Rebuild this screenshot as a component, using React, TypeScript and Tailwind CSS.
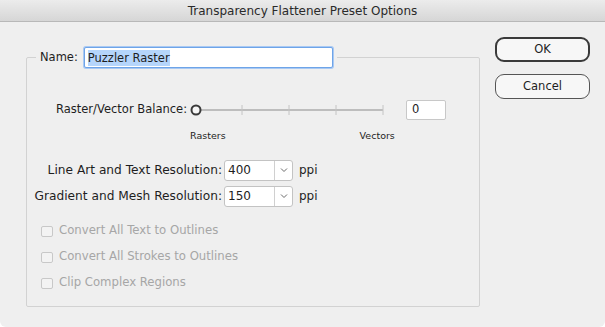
import React from "react";

const font = { fontFamily: '"DejaVu Sans", Verdana, sans-serif' };

const Slider: React.FC = () => (
  <svg width="196" height="14" viewBox="0 0 196 14" className="block">
    <line x1="10" y1="7" x2="193" y2="7" stroke="#bdbdbd" strokeWidth="2" />
    {[52, 99, 146, 193].map(x => (
      <line key={x} x1={x} y1="2" x2={x} y2="12" stroke="#c4c4c4" strokeWidth="1" />
    ))}
    <circle cx="6" cy="7" r="4.5" fill="#f6f6f6" stroke="#3a3a3a" strokeWidth="2" />
  </svg>
);

const Chevron: React.FC = () => (
  <svg width="8" height="6" viewBox="0 0 8 6">
    <path d="M1 1.5 L4 4.5 L7 1.5" fill="none" stroke="#6b6b6b" strokeWidth="1" />
  </svg>
);

const ResRow: React.FC<{ label: string; value: string }> = ({ label, value }) => (
  <div className="flex h-[26px] items-center">
    <span className="w-[195px] whitespace-nowrap text-right text-[12.2px] text-[#1e1e1e]">{label}</span>
    <div className="ml-[2px] flex h-[21px] w-[69px] items-stretch rounded-[3px] border border-[#c3c3c3] bg-white">
      <div className="flex flex-1 items-center pl-[3px] text-[12px] text-[#1e1e1e]">{value}</div>
      <div className="flex w-[18px] items-center justify-center border-l border-[#d0d0d0]">
        <Chevron />
      </div>
    </div>
    <span className="ml-[6px] text-[12px] text-[#1e1e1e]">ppi</span>
  </div>
);

const Check: React.FC<{ label: string }> = ({ label }) => (
  <div className="flex h-[26px] items-center">
    <div className="h-[11px] w-[12px] rounded-[2px] border border-[#c8c8c8] bg-[#f3f3f3]" />
    <span className="ml-[6px] text-[11.7px] text-[#a6a6a6]">{label}</span>
  </div>
);

export default function App() {
  return (
    <div className="h-[327px] w-[605px] bg-white" style={font}>
      <div className="flex h-[327px] w-[605px] flex-col overflow-hidden rounded-b-[6px] bg-[#efefef]">
        <div className="flex h-[22px] items-center justify-center border-b border-[#b8b8b8] bg-gradient-to-b from-[#ececec] to-[#d6d6d6] text-[12px] text-[#2a2a2a]">
          Transparency Flattener Preset Options
        </div>

        <div className="flex">
          <fieldset className="ml-[26px] mt-[25px] h-[260px] w-[454px] rounded-[2px] border border-[#d2d2d2]">
            <legend className="ml-[9px] flex items-center px-[4px]">
              <span className="text-[11.5px] text-[#1e1e1e]">Name:</span>
              <div className="ml-[6px] flex h-[21px] w-[249px] items-center rounded-[2px] border border-[#6ea4e8] bg-white pl-[3px] shadow-[0_0_0_1px_#a9c9f3]">
                <span className="bg-[#b5d5fb] text-[11.5px] leading-[16px] text-[#1e1e1e]">Puzzler Raster</span>
              </div>
            </legend>

            <div className="mt-[32px] flex items-center pl-[29px]">
              <span className="w-[134px] whitespace-nowrap text-[11.5px] text-[#1e1e1e]">Raster/Vector Balance:</span>
              <Slider />
              <div className="ml-[20px] flex h-[20px] w-[40px] items-center rounded-[2px] border border-[#c8c8c8] bg-white pl-[5px] text-[11.5px] text-[#1e1e1e]">
                0
              </div>
            </div>

            <div className="mt-[8px] flex h-[16px] items-center text-[9.5px] text-[#1e1e1e]">
              <span className="ml-[163px]">Rasters</span>
              <span className="ml-[134px]">Vectors</span>
            </div>

            <div className="mt-[13px] flex flex-col">
              <ResRow label="Line Art and Text Resolution:" value="400" />
              <ResRow label="Gradient and Mesh Resolution:" value="150" />
            </div>

            <div className="mt-[9px] flex flex-col pl-[14px]">
              <Check label="Convert All Text to Outlines" />
              <Check label="Convert All Strokes to Outlines" />
              <Check label="Clip Complex Regions" />
            </div>
          </fieldset>

          <div className="ml-[15px] mt-[15px] flex flex-col gap-[12px]">
            <button className="h-[25px] w-[95px] rounded-[9px] border-2 border-[#3a3a3a] bg-[#f7f7f7] text-[11.5px] text-[#1e1e1e]">
              OK
            </button>
            <button className="h-[25px] w-[95px] rounded-[9px] border border-[#555] bg-[#f7f7f7] text-[11.5px] text-[#1e1e1e]">
              Cancel
            </button>
          </div>
        </div>
      </div>
    </div>
  );
}
